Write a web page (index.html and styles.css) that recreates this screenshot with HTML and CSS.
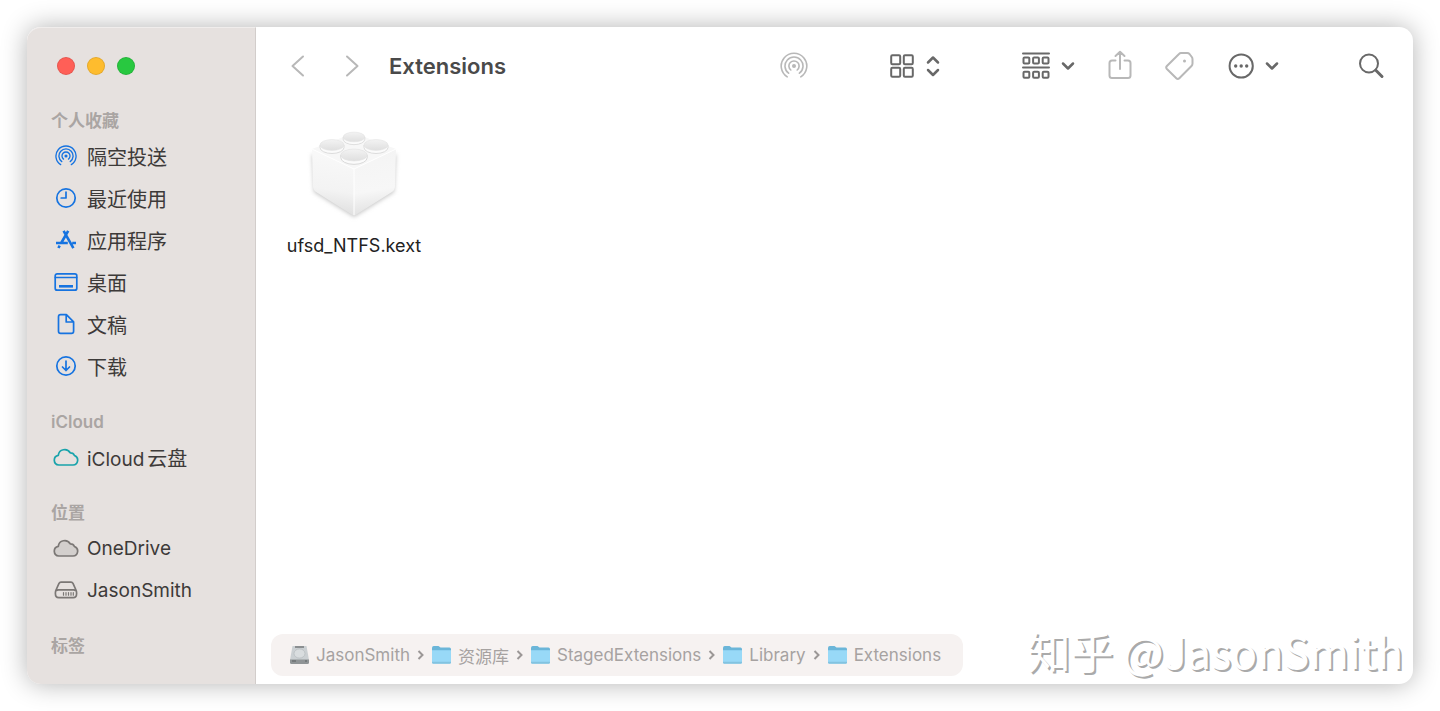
FILE: index.html
```html
<!DOCTYPE html>
<html lang="zh-CN">
<head>
    <meta charset="UTF-8">
    <meta name="viewport" content="width=device-width, initial-scale=1.0">
    <title>Extensions</title>
    <link rel="stylesheet" href="styles.css">
</head>
<body>
    <!-- shared shapes -->
    <svg class="defs" width="0" height="0" aria-hidden="true">
        <symbol id="airdrop" viewBox="0 0 28 28">
            <circle cx="14" cy="14" r="2" fill="currentColor" stroke="none"/>
            <path d="M10.8 18A5.1 5.1 0 1 1 17.2 18M8.6 21.2A9 9 0 1 1 19.4 21.2M7.2 24.9A12.8 12.8 0 1 1 20.8 24.9"/>
        </symbol>
        <symbol id="cloud" viewBox="0 0 26 20">
            <path d="M5.8 18H20A4.9 4.9 0 0 0 21.4 8.5 4.2 4.2 0 0 0 17.2 5.8 6.4 6.4 0 0 0 5.3 8.3 4.9 4.9 0 0 0 5.8 18Z"/>
        </symbol>
        <symbol id="chevron" viewBox="0 0 14 10">
            <path d="M2 2.5 7 7.5 12 2.5"/>
        </symbol>
        <symbol id="folder" viewBox="0 0 21 20">
            <path d="M1 3Q1 1 2.8 1H7.5L9.5 2.6H18.5Q20 2.6 20 4.2V8H1Z" fill="#6bb6d9"/>
            <path d="M1 5.2H20V17.2Q20 18.6 18.6 18.6H2.4Q1 18.6 1 17.2Z" fill="#98d9f7"/>
            <path d="M1 16.8H20V17.4Q20 18.8 18.6 18.8H2.4Q1 18.8 1 17.4Z" fill="#82c3e0"/>
        </symbol>
    </svg>

    <div class="window">
        <aside class="sidebar">
            <div class="lights">
                <button class="light red" aria-label="关闭"></button>
                <button class="light yellow" aria-label="最小化"></button>
                <button class="light green" aria-label="缩放"></button>
            </div>

            <h2>个人收藏</h2>
            <ul>
                <li><a href="#"><svg class="icon thin" width="22" height="22"><use href="#airdrop"/></svg>隔空投送</a></li>
                <li><a href="#"><svg class="icon" width="22" height="22" viewBox="0 0 22 22"><circle cx="11" cy="11" r="9.2"/><path d="M11 5V11H6.2"/></svg>最近使用</a></li>
                <li><a href="#"><svg class="icon apps" width="22" height="22" viewBox="0 0 22 22"><path d="M8.6 1.8 18.4 19.2M13.2 1.8 6.2 14M1 14H12.8M17.2 14H21M4.7 16.6 3.4 19"/></svg>应用程序</a></li>
                <li><a href="#"><svg class="icon" width="24" height="22" viewBox="0 0 24 22"><rect x="1.2" y="2.8" width="21.6" height="16.4" rx="2"/><path d="M1.4 6.5H22.6"/><path d="M5 14H19V16.6H5Z" fill="currentColor" stroke="none"/></svg>桌面</a></li>
                <li><a href="#"><svg class="icon" width="22" height="22" viewBox="0 0 22 22"><path d="M5.6 1.6H11.4L18.6 8.8V18.2Q18.6 20.3 16.5 20.3H5.6Q3.5 20.3 3.5 18.2V3.7Q3.5 1.6 5.6 1.6ZM11.2 1.8V9H18.4"/></svg>文稿</a></li>
                <li><a href="#"><svg class="icon" width="22" height="22" viewBox="0 0 22 22"><circle cx="11" cy="11" r="9.2"/><path d="M11 6V15.5M7.5 12 11 15.5 14.5 12"/></svg>下载</a></li>
            </ul>

            <h2>iCloud</h2>
            <ul class="latin">
                <li><a href="#"><svg class="icon teal" width="26" height="20"><use href="#cloud"/></svg><span>iCloud<span class="cjk">云盘</span></span></a></li>
            </ul>

            <h2>位置</h2>
            <ul class="latin">
                <li><a href="#"><svg class="icon gray filled" width="26" height="20"><use href="#cloud"/></svg>OneDrive</a></li>
                <li><a href="#"><svg class="icon gray" width="24" height="20" viewBox="0 0 24 20"><path d="M7 2.2H17Q18.4 2.2 19 3.4L22.2 10.5Q22.6 11.5 22.6 13.5 22.6 17.6 19.3 17.6H4.7Q1.4 17.6 1.4 13.5 1.4 11.5 1.8 10.5L5 3.4Q5.6 2.2 7 2.2ZM2.2 10.6Q3 9.9 4.5 9.9H19.5Q21 9.9 21.8 10.6"/><path d="M9.5 12.5V15.2M12 12.5V15.2M14.5 12.5V15.2M17 12.5V15.2M19.3 12.5V15.2" stroke-width="1.2"/></svg>JasonSmith</a></li>
            </ul>

            <h2>标签</h2>
        </aside>

        <main class="main">
            <header class="toolbar">
                <div class="nav">
                    <button class="faded" aria-label="后退"><svg width="24" height="26" viewBox="0 0 24 26"><path d="M17 3.5 6.5 13 17 22.5"/></svg></button>
                    <button class="faded" aria-label="前进"><svg width="24" height="26" viewBox="0 0 24 26"><path d="M7 3.5 17.5 13 7 22.5"/></svg></button>
                </div>
                <h1>Extensions</h1>

                <div class="tools">
                    <div class="views">
                        <button class="faded thin" aria-label="隔空投送"><svg width="28" height="28"><use href="#airdrop"/></svg></button>
                        <button aria-label="显示方式">
                            <svg width="24" height="26" viewBox="0 0 24 26"><rect x="1.2" y="2.2" width="9" height="9" rx="1.2"/><rect x="13.8" y="2.2" width="9" height="9" rx="1.2"/><rect x="1.2" y="14.8" width="9" height="9" rx="1.2"/><rect x="13.8" y="14.8" width="9" height="9" rx="1.2"/></svg>
                            <svg class="bold" width="16" height="24" viewBox="0 0 16 24"><path d="M3 8.5 8 3.5 13 8.5M3 16 8 21 13 16"/></svg>
                        </button>
                    </div>
                    <div class="group">
                        <button aria-label="分组">
                            <svg width="28" height="28" viewBox="0 0 28 28"><path d="M1 1.5H27M1 15.5H27"/><rect x="1.5" y="5.5" width="5.8" height="6" rx="1"/><rect x="11.1" y="5.5" width="5.8" height="6" rx="1"/><rect x="20.7" y="5.5" width="5.8" height="6" rx="1"/><rect x="1.5" y="19.8" width="5.8" height="6" rx="1"/><rect x="11.1" y="19.8" width="5.8" height="6" rx="1"/><rect x="20.7" y="19.8" width="5.8" height="6" rx="1"/></svg>
                            <svg class="bold" width="14" height="10"><use href="#chevron"/></svg>
                        </button>
                        <button class="faded" aria-label="共享"><svg width="28" height="32" viewBox="0 0 28 32"><path d="M9.5 10.5H6Q3.5 10.5 3.5 13V25.5Q3.5 28 6 28H22Q24.5 28 24.5 25.5V13Q24.5 10.5 22 10.5H18.5M14 19V2M9.5 6 14 1.8 18.5 6"/></svg></button>
                        <button class="faded" aria-label="标签"><svg width="30" height="30" viewBox="0 0 30 30"><path d="M16 2H22.2Q23.6 2 24.5 3L26.8 6Q27.5 7 27.5 8.2V12.5Q27.5 14 26.5 15L14.3 27.2Q12.8 28.7 11.3 27.2L1.9 18Q.5 16.5 1.9 15L14 3Q14.9 2 16 2Z"/><circle cx="19.5" cy="10" r="1.5" fill="currentColor" stroke="none"/></svg></button>
                        <button aria-label="更多">
                            <svg width="28" height="28" viewBox="0 0 28 28"><circle cx="15.2" cy="14" r="11.6"/><g fill="currentColor" stroke="none"><circle cx="9.7" cy="14" r="1.7"/><circle cx="15.2" cy="14" r="1.7"/><circle cx="20.7" cy="14" r="1.7"/></g></svg>
                            <svg class="bold" width="14" height="10"><use href="#chevron"/></svg>
                        </button>
                    </div>
                    <button aria-label="搜索"><svg width="28" height="28" viewBox="0 0 28 28"><circle cx="12" cy="11.5" r="9"/><path d="M18.8 18.3 25 24.5" stroke-width="3"/></svg></button>
                </div>
            </header>

            <section class="files">
                <a class="file" href="#">
                    <svg width="100" height="100" viewBox="0 0 100 100" aria-hidden="true">
                        <defs>
                            <linearGradient id="left" x1=".4" y1="0" x2=".3" y2="1"><stop offset="0" stop-color="#f9f9f9"/><stop offset=".6" stop-color="#f3f3f3"/><stop offset="1" stop-color="#dcdcdc"/></linearGradient>
                            <linearGradient id="right" x1=".6" y1="0" x2=".7" y2="1"><stop offset="0" stop-color="#f4f4f4"/><stop offset=".6" stop-color="#f7f7f7"/><stop offset="1" stop-color="#dedede"/></linearGradient>
                            <linearGradient id="stud" x1="0" y1="0" x2="0" y2="1"><stop offset="0" stop-color="#f3f3f3"/><stop offset="1" stop-color="#dfdfdf"/></linearGradient>
                            <filter id="soft" x="-20%" y="-20%" width="140%" height="140%"><feGaussianBlur stdDeviation="2"/></filter>
                            <g id="knob">
                                <path d="M-12 0V2.5A12 6 0 0 0 12 2.5V0Z" fill="#fbfbfb" stroke="#d4d4d4" stroke-width=".8"/>
                                <ellipse rx="12" ry="5.4" fill="url(#stud)" stroke="#e2e2e2" stroke-width=".6"/>
                            </g>
                        </defs>
                        <path d="M8 30 50 48 92 30 90 68 50 93 10 68Z" fill="#c4c4c4" filter="url(#soft)"/>
                        <path d="M8 25 50 9 92 25 50 45Z" fill="#f7f7f7"/>
                        <path d="M8 25 50 45V92L12 68Q9 66 9 62Z" fill="url(#left)"/>
                        <path d="M92 25 50 45V92L88 68Q91 66 91 62Z" fill="url(#right)"/>
                        <path d="M8 25 50 45 92 25M50 45V91" fill="none" stroke="#fff"/>
                        <use href="#knob" transform="translate(50 13) scale(.9)"/>
                        <use href="#knob" transform="translate(28 21)"/>
                        <use href="#knob" transform="translate(72 21)"/>
                        <use href="#knob" transform="translate(50 31) scale(1.1)"/>
                    </svg>
                    <span>ufsd_NTFS.kext</span>
                </a>
            </section>

            <nav class="pathbar" aria-label="路径">
                <a href="#"><svg width="21" height="20" viewBox="0 0 21 20"><path d="M3.5 1H17.5L20 15H1Z" fill="#cbd0d3"/><path d="M6 1H15V3H6Z" fill="#8b8f91"/><path d="M1 14.5H20V17.5Q20 19 18.5 19H2.5Q1 19 1 17.5Z" fill="#8f9496"/><path d="M3 16H7M16 16H18" stroke="#5d6163" stroke-width="1.2"/><ellipse cx="10.5" cy="8.5" rx="5.5" ry="4.6" fill="#d9dddf" stroke="#b4babd" stroke-width=".7"/></svg>JasonSmith</a>
                <svg class="sep" width="9" height="12" viewBox="0 0 9 12"><path d="M2.5 2 6.5 6 2.5 10"/></svg>
                <a href="#"><svg width="21" height="20"><use href="#folder"/></svg>资源库</a>
                <svg class="sep" width="9" height="12" viewBox="0 0 9 12"><path d="M2.5 2 6.5 6 2.5 10"/></svg>
                <a href="#"><svg width="21" height="20"><use href="#folder"/></svg>StagedExtensions</a>
                <svg class="sep" width="9" height="12" viewBox="0 0 9 12"><path d="M2.5 2 6.5 6 2.5 10"/></svg>
                <a href="#"><svg width="21" height="20"><use href="#folder"/></svg>Library</a>
                <svg class="sep" width="9" height="12" viewBox="0 0 9 12"><path d="M2.5 2 6.5 6 2.5 10"/></svg>
                <a href="#"><svg width="21" height="20"><use href="#folder"/></svg>Extensions</a>
            </nav>
        </main>

        <div class="watermark">知乎 @JasonSmith</div>
    </div>
</body>
</html>
```
FILE: styles.css
```css
* {
    box-sizing: border-box;
}
body {
    margin: 0;
    padding: 27px;
    min-height: 100vh;
    display: flex;
    background: #fff;
    font-family: Inter, "Noto Sans CJK SC", sans-serif;
    color: #3d3a39;
}
h1, h2, ul {
    margin: 0;
    padding: 0;
}
a {
    color: inherit;
    text-decoration: none;
}
button {
    padding: 0;
    border: 0;
    background: none;
    cursor: pointer;
}
svg {
    flex: none;
}
.defs {
    position: absolute;
}
.window {
    position: relative;
    flex: 1;
    display: flex;
    border-radius: 14px;
    background: #fff;
    box-shadow: 0 0 26px rgba(0, 0, 0, 0.3);
}

/* sidebar */
.sidebar {
    width: 229px;
    flex: none;
    padding-bottom: 24px;
    background: #e6e1df;
    border-top: 1px solid #f0edec;
    border-right: 1px solid #d2cdcb;
    border-radius: 14px 0 0 14px;
}
.lights {
    display: flex;
    gap: 12px;
    padding: 29px 30px 31px;
}
.light {
    width: 18px;
    height: 18px;
    border-radius: 50%;
    border: 1px solid rgba(0, 0, 0, 0.1);
}
.red {
    background: #ff5f57;
}
.yellow {
    background: #febc2e;
}
.green {
    background: #28c840;
}
.sidebar h2 {
    padding: 2px 0 0 24px;
    font-size: 17px;
    font-weight: 600;
    line-height: 27px;
    color: #aaa5a3;
}
.sidebar ul {
    list-style: none;
    margin-bottom: 20px;
}
.sidebar li a {
    display: grid;
    grid-template-columns: 26px 1fr;
    align-items: center;
    gap: 8px;
    height: 42px;
    padding-left: 26px;
    font-size: 20px;
}
.sidebar .latin a {
    font-size: 19px;
}
.cjk {
    margin-left: 3px;
    font-size: 20px;
}
.icon {
    justify-self: center;
    color: #1673e0;
    fill: none;
    stroke: currentColor;
    stroke-width: 1.7;
    stroke-linecap: round;
    stroke-linejoin: round;
}
.icon.apps {
    stroke-width: 2.6;
    stroke-linecap: butt;
}
.icon.teal {
    color: #19a3ab;
}
.icon.gray {
    color: #7b7775;
}
.icon.filled {
    fill: #d3cfcd;
}

/* main area */
.main {
    flex: 1;
    min-width: 0;
    display: flex;
    flex-direction: column;
}
.toolbar {
    display: flex;
    align-items: center;
    height: 78px;
    padding: 0 28px 0 30px;
}
.nav {
    display: flex;
    gap: 30px;
}
.toolbar h1 {
    margin-left: 25px;
    font-size: 22px;
    font-weight: 600;
    color: #4a4a4a;
}
.tools {
    display: flex;
    align-items: center;
    gap: 78px;
    margin-left: auto;
}
.views {
    display: flex;
    align-items: center;
    gap: 82px;
    margin-right: 3px;
}
.group {
    display: flex;
    align-items: center;
    gap: 31px;
}
.toolbar button {
    display: flex;
    align-items: center;
    gap: 11px;
    color: #686868;
}
.toolbar svg {
    fill: none;
    stroke: currentColor;
    stroke-width: 2;
    stroke-linecap: round;
    stroke-linejoin: round;
}
.toolbar .bold {
    stroke-width: 2.5;
}
.toolbar .faded {
    color: #b8b8b8;
}
.toolbar .thin svg {
    stroke-width: 1.6;
}
.files {
    flex: 1;
    padding: 19px 17px;
}
.file {
    display: inline-flex;
    flex-direction: column;
    align-items: center;
    gap: 10px;
    min-width: 162px;
    font-size: 18px;
    line-height: 24px;
    color: #222;
}
.pathbar {
    display: flex;
    align-items: center;
    align-self: flex-start;
    gap: 6px;
    height: 42px;
    margin: 0 15px 8px;
    padding: 0 22px 0 18px;
    border-radius: 12px;
    background: #f6f2f1;
    font-size: 17px;
    color: #a6a2a1;
}
.pathbar a {
    display: flex;
    align-items: center;
    gap: 6px;
}
.sep {
    fill: none;
    stroke: #9b9796;
    stroke-width: 2;
}
.watermark {
    position: absolute;
    right: 10px;
    bottom: 4px;
    font-family: "Noto Sans CJK SC", sans-serif;
    font-size: 43px;
    line-height: 60px;
    color: #fff;
    text-shadow: 2px 2px 0 #aaa;
    pointer-events: none;
}
```
